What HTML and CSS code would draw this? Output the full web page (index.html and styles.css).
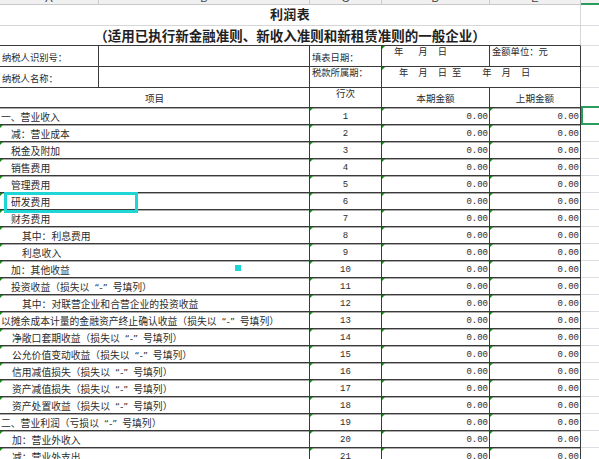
FILE: index.html
```html
<!DOCTYPE html>
<html lang="zh-CN">
<head>
<meta charset="utf-8">
<title>利润表</title>
<link rel="stylesheet" href="styles.css">
</head>
<body>
<div class="sheet">
  <div class="colhead">
    <div class="ch">A</div><div class="ch">B</div><div class="ch">C</div><div class="ch">D</div><div class="ch">E</div><div class="ch sel">F</div>
  </div>
  <div class="grid">
    <div class="c title-cell t1"><span class="title">利润表</span></div><div class="c f"></div>
    <div class="c title-cell t2"><span class="subtitle">（适用已执行新金融准则、新收入准则和新租赁准则的一般企业）</span></div><div class="c f"></div>

    <div class="c info mid">纳税人识别号：</div><div class="c"></div><div class="c info mid">填表日期：</div><div class="c info top g"><span class="s2 first">年</span><span class="s3">月</span><span class="s2">日</span></div><div class="c info top">金额单位：元</div><div class="c f"></div>
    <div class="c info mid">纳税人名称：</div><div class="c"></div><div class="c info top">税款所属期：</div><div class="c info top wide g"><span class="s3 first">年</span><span class="s2">月</span><span class="s2">日</span><span class="s1">至</span><span class="s4">年</span><span class="s2">月</span><span class="s2">日</span></div><div class="c f"></div>

    <div class="c hd lab">项目</div><div class="c hd top">行次</div><div class="c hd">本期金额</div><div class="c hd">上期金额</div><div class="c f"></div>

    <div class="c d lab l0">一、营业收入</div><div class="c d num g">1</div><div class="c d amt g">0.00</div><div class="c d amt g">0.00</div><div class="c f"></div>
    <div class="c d lab l1 g">减：营业成本</div><div class="c d num g">2</div><div class="c d amt g">0.00</div><div class="c d amt g">0.00</div><div class="c f"></div>
    <div class="c d lab l1 g">税金及附加</div><div class="c d num g">3</div><div class="c d amt g">0.00</div><div class="c d amt g">0.00</div><div class="c f"></div>
    <div class="c d lab l1 g">销售费用</div><div class="c d num g">4</div><div class="c d amt g">0.00</div><div class="c d amt g">0.00</div><div class="c f"></div>
    <div class="c d lab l1 g">管理费用</div><div class="c d num g">5</div><div class="c d amt g">0.00</div><div class="c d amt g">0.00</div><div class="c f"></div>
    <div class="c d lab l1 g">研发费用</div><div class="c d num g">6</div><div class="c d amt g">0.00</div><div class="c d amt g">0.00</div><div class="c f"></div>
    <div class="c d lab l1 g">财务费用</div><div class="c d num g">7</div><div class="c d amt g">0.00</div><div class="c d amt g">0.00</div><div class="c f"></div>
    <div class="c d lab l2 g">其中：利息费用</div><div class="c d num g">8</div><div class="c d amt g">0.00</div><div class="c d amt g">0.00</div><div class="c f"></div>
    <div class="c d lab l2 g">利息收入</div><div class="c d num g">9</div><div class="c d amt g">0.00</div><div class="c d amt g">0.00</div><div class="c f"></div>
    <div class="c d lab l1 g">加：其他收益</div><div class="c d num g">10</div><div class="c d amt g">0.00</div><div class="c d amt g">0.00</div><div class="c f"></div>
    <div class="c d lab l1 g">投资收益（损失以<span class="q">“-”</span>号填列）</div><div class="c d num g">11</div><div class="c d amt g">0.00</div><div class="c d amt g">0.00</div><div class="c f"></div>
    <div class="c d lab l2 g">其中：对联营企业和合营企业的投资收益</div><div class="c d num g">12</div><div class="c d amt g">0.00</div><div class="c d amt g">0.00</div><div class="c f"></div>
    <div class="c d lab l0 g">以摊余成本计量的金融资产终止确认收益（损失以<span class="q">“-”</span>号填列）</div><div class="c d num g">13</div><div class="c d amt g">0.00</div><div class="c d amt g">0.00</div><div class="c f"></div>
    <div class="c d lab l1b g">净敞口套期收益（损失以<span class="q">“-”</span>号填列）</div><div class="c d num g">14</div><div class="c d amt g">0.00</div><div class="c d amt g">0.00</div><div class="c f"></div>
    <div class="c d lab l1b g">公允价值变动收益（损失以<span class="q">“-”</span>号填列）</div><div class="c d num g">15</div><div class="c d amt g">0.00</div><div class="c d amt g">0.00</div><div class="c f"></div>
    <div class="c d lab l1b g">信用减值损失（损失以<span class="q">“-”</span>号填列）</div><div class="c d num g">16</div><div class="c d amt g">0.00</div><div class="c d amt g">0.00</div><div class="c f"></div>
    <div class="c d lab l1b g">资产减值损失（损失以<span class="q">“-”</span>号填列）</div><div class="c d num g">17</div><div class="c d amt g">0.00</div><div class="c d amt g">0.00</div><div class="c f"></div>
    <div class="c d lab l1b g">资产处置收益（损失以<span class="q">“-”</span>号填列）</div><div class="c d num g">18</div><div class="c d amt g">0.00</div><div class="c d amt g">0.00</div><div class="c f"></div>
    <div class="c d lab l0">二、营业利润（亏损以<span class="q">“-”</span>号填列）</div><div class="c d num g">19</div><div class="c d amt g">0.00</div><div class="c d amt g">0.00</div><div class="c f"></div>
    <div class="c d lab l1b g">加：营业外收入</div><div class="c d num g">20</div><div class="c d amt g">0.00</div><div class="c d amt g">0.00</div><div class="c f"></div>
    <div class="c d lab l1b g">减：营业外支出</div><div class="c d num g">21</div><div class="c d amt g">0.00</div><div class="c d amt g">0.00</div><div class="c f"></div>
  </div>
  <div class="sel-cyan"></div>
  <div class="dot-cyan"></div>
  <div class="sel-green"></div>
</div>
</body>
</html>
```
FILE: styles.css
```css
html, body {
  margin: 0;
  padding: 0;
  background: #ffffff;
}

.sheet {
  position: relative;
  width: 599px;
  height: 459px;
  overflow: hidden;
  font-family: "Noto Sans CJK SC", sans-serif;
  color: #2b2b2b;
}

.colhead {
  display: grid;
  grid-template-columns: 99px 211px 72px 108px 91px 80px;
  height: 20px;
  margin-top: -15px;
  box-sizing: border-box;
  background: #f0f0f0;
  border-bottom: 1px solid #c8c8c8;
  font: 11px/12px "Liberation Sans", sans-serif;
  color: #444;
}

.ch {
  box-sizing: border-box;
  border-right: 1px solid #cdcdcd;
  display: flex;
  align-items: flex-end;
  justify-content: center;
}

.ch.sel {
  box-shadow: inset 0 -1px 0 #2a9d5c, 0 1px 0 #2a9d5c;
}

.grid {
  display: grid;
  grid-template-columns: 99px 211px 72px 108px 91px 80px;
  grid-template-rows: 21px 20px 21px 21px 20px repeat(21, 17px);
}

.c {
  box-sizing: border-box;
  position: relative;
  min-width: 0;
  display: flex;
  align-items: center;
  white-space: nowrap;
  font-size: 9.8px;
  border-right: 1px solid #3a3a3a;
  border-bottom: 1px solid #3a3a3a;
}

.f {
  border-right: 1px solid #dadde2;
  border-bottom: 1px solid #dadde2;
}

.title-cell {
  grid-column: span 5;
  justify-content: center;
  border-right-color: #d6d6d6;
  font-weight: 700;
  color: #1f1f1f;
}

.t1 {
  border-bottom-color: #d6d6d6;
  padding-bottom: 3px;
}

.t2 {
  padding-bottom: 2px;
}

.title {
  font-size: 13px;
  letter-spacing: 0.4px;
}

.subtitle {
  font-size: 13.5px;
}

.info {
  padding-left: 2px;
  font-size: 9.3px;
}

.mid {
  padding-top: 2px;
}

.top {
  align-items: flex-start;
  line-height: 10px;
}

.wide {
  grid-column: span 2;
}

.s1 { margin-left: 5px; }
.s2 { margin-left: 10px; }
.s3 { margin-left: 15px; }
.s4 { margin-left: 21px; }

.s2.first { margin-left: 10px; }
.s3.first { margin-left: 15px; }

.hd {
  justify-content: center;
  font-size: 9.6px;
}

.lab {
  grid-column: span 2;
}

.d {
  box-shadow: inset 0 1px 0 #ababab;
  padding-top: 2px;
}

.l0 { padding-left: 1px; }
.l1 { padding-left: 11px; }
.l1b { padding-left: 12px; }
.l2 { padding-left: 22px; }

.q {
  font-family: "DejaVu Sans", sans-serif;
  font-size: 9.5px;
  padding: 0 5px;
}

.num {
  justify-content: center;
  font-family: "Liberation Mono", monospace;
  font-size: 9px;
}

.amt {
  justify-content: flex-end;
  padding-right: 1px;
  font-family: "Liberation Mono", monospace;
  font-size: 9px;
}

.g::before {
  content: "";
  position: absolute;
  left: 0;
  top: 0;
  width: 0;
  height: 0;
  border-top: 3px solid #118a11;
  border-right: 3px solid transparent;
}

.sel-cyan {
  position: absolute;
  left: 4px;
  top: 192px;
  width: 134px;
  height: 21px;
  box-sizing: border-box;
  border: 3px solid #1fd5d5;
}

.dot-cyan {
  position: absolute;
  left: 235px;
  top: 265px;
  width: 6px;
  height: 6px;
  background: #1fd5d5;
}

.sel-green {
  position: absolute;
  left: 581px;
  top: 106px;
  width: 22px;
  height: 19px;
  box-sizing: border-box;
  border: 2px solid #2a9d5c;
}
```
